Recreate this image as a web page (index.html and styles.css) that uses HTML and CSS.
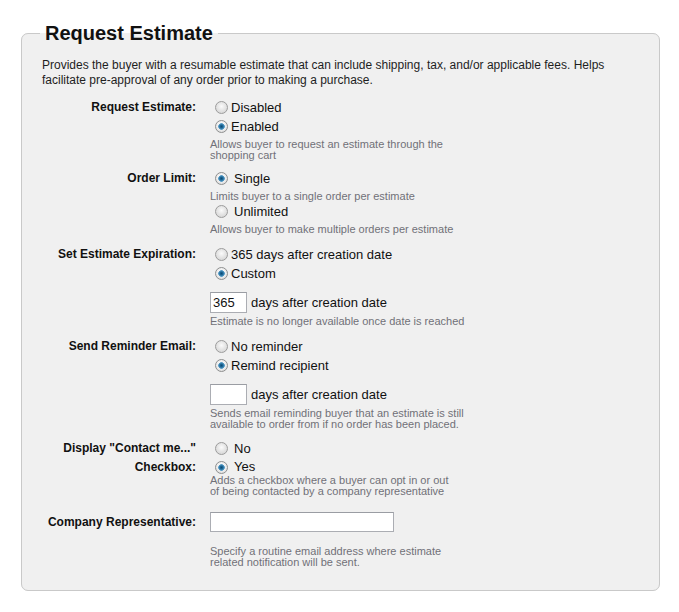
FILE: index.html
```html
<!DOCTYPE html>
<html>
<head>
<meta charset="utf-8">
<link rel="stylesheet" href="styles.css">
</head>
<body>
<fieldset class="panel">
  <legend class="panel-title">Request Estimate</legend>
  <p class="intro">Provides the buyer with a resumable estimate that can include shipping, tax, and/or applicable fees. Helps<br>facilitate pre-approval of any order prior to making a purchase.</p>

  <div class="row row-1">
    <div class="label">Request Estimate:</div>
    <div class="field">
      <label class="opt"><input class="radio" type="radio" name="re">Disabled</label>
      <label class="opt"><input class="radio" type="radio" name="re" checked>Enabled</label>
      <div class="help">Allows buyer to request an estimate through the<br>shopping cart</div>
    </div>
  </div>

  <div class="row row-2">
    <div class="label">Order Limit:</div>
    <div class="field">
      <label class="opt wide"><input class="radio" type="radio" name="ol" checked>Single</label>
      <div class="help">Limits buyer to a single order per estimate</div>
      <label class="opt wide"><input class="radio" type="radio" name="ol">Unlimited</label>
      <div class="help">Allows buyer to make multiple orders per estimate</div>
    </div>
  </div>

  <div class="row row-3">
    <div class="label">Set Estimate Expiration:</div>
    <div class="field">
      <label class="opt"><input class="radio" type="radio" name="ex">365 days after creation date</label>
      <label class="opt"><input class="radio" type="radio" name="ex" checked>Custom</label>
      <div class="days"><input class="num" type="text" value="365"><span class="days-text">days after creation date</span></div>
      <div class="help">Estimate is no longer available once date is reached</div>
    </div>
  </div>

  <div class="row row-4">
    <div class="label">Send Reminder Email:</div>
    <div class="field">
      <label class="opt"><input class="radio" type="radio" name="rm">No reminder</label>
      <label class="opt"><input class="radio" type="radio" name="rm" checked>Remind recipient</label>
      <div class="days"><input class="num" type="text" value=""><span class="days-text">days after creation date</span></div>
      <div class="help">Sends email reminding buyer that an estimate is still<br>available to order from if no order has been placed.</div>
    </div>
  </div>

  <div class="row row-5">
    <div class="label">Display "Contact me..."<br>Checkbox:</div>
    <div class="field">
      <label class="opt wide"><input class="radio" type="radio" name="cm">No</label>
      <label class="opt wide opt-short"><input class="radio" type="radio" name="cm" checked>Yes</label>
      <div class="help help-tight">Adds a checkbox where a buyer can opt in or out<br>of being contacted by a company representative</div>
    </div>
  </div>

  <div class="row row-6">
    <div class="label label-input">Company Representative:</div>
    <div class="field">
      <input class="text" type="text" value="">
      <div class="help help-loose">Specify a routine email address where estimate<br>related notification will be sent.</div>
    </div>
  </div>
</fieldset>
</body>
</html>
```

FILE: styles.css
```css
html, body {
  margin: 0;
  padding: 0;
  background: #ffffff;
}

body {
  font-family: "Liberation Sans", Arial, sans-serif;
  color: #222222;
  padding: 0 20px 24px 21px;
}

.panel {
  margin: 21px 0 0 0;
  width: 639px;
  box-sizing: border-box;
  border: 1px solid #c9c9c9;
  border-radius: 7px;
  background: #f0f0f0;
  padding: 13px 20px 22px 20px;
  min-inline-size: 0;
}

.panel-title {
  font-size: 20px;
  line-height: 24px;
  font-weight: bold;
  color: #111111;
  padding: 0 5px;
  margin-left: -2px;
}

.intro {
  margin: 0;
  font-size: 12px;
  line-height: 15px;
  color: #1e1e1e;
}

.row {
  display: grid;
  grid-template-columns: 154px 1fr;
  column-gap: 14px;
}

.row-1 { margin-top: 10px; }
.row-2 { margin-top: 8px; }
.row-3 { margin-top: 10px; }
.row-4 { margin-top: 10px; }
.row-5 { margin-top: 9px; }
.row-6 { margin-top: 15px; }

.label {
  text-align: right;
  font-weight: bold;
  font-size: 12px;
  line-height: 19px;
  color: #111111;
}

.label-input {
  line-height: 20px;
}

.field {
  display: flex;
  flex-direction: column;
  align-items: flex-start;
}

.opt {
  display: flex;
  align-items: center;
  height: 19px;
  font-size: 13px;
  color: #111111;
}

.opt-short {
  height: 12px;
  line-height: 12px;
  margin-top: 3px;
}

.radio {
  appearance: none;
  -webkit-appearance: none;
  width: 13px;
  height: 13px;
  margin: 0 3px 0 5px;
  border-radius: 50%;
  box-sizing: border-box;
  border: 1px solid #9c9c9c;
  background: radial-gradient(circle at 50% 40%, #fbfbfb 0, #e6e6e6 45%, #cfcfcf 100%);
  flex: none;
}

.radio:checked {
  border-color: #8e8f8f;
  background:
    radial-gradient(circle at 50% 50%, #0d4a73 0, #1f6a99 1.6px, #5b9ec8 3px, rgba(255,255,255,0) 3.6px),
    radial-gradient(circle at 50% 40%, #ffffff 0, #ececec 55%, #d2d2d2 100%);
}

.wide .radio {
  margin-right: 6px;
}

.help {
  font-size: 11px;
  line-height: 11px;
  color: #717178;
  margin-top: 3px;
}

.help-tight {
  margin-top: 2px;
}

.help-loose {
  margin-top: 14px;
}

.days {
  display: flex;
  align-items: center;
  margin-top: 9px;
}

.num {
  width: 37px;
  height: 21px;
  box-sizing: border-box;
  border: 1px solid #abadb3;
  border-top-color: #9a9da3;
  background: #ffffff;
  font-family: "Liberation Sans", Arial, sans-serif;
  font-size: 13px;
  color: #111111;
  padding: 0 2px;
  margin: 0;
  outline: none;
}

.days-text {
  font-size: 13px;
  color: #111111;
  margin-left: 4px;
}

.text {
  width: 184px;
  height: 20px;
  box-sizing: border-box;
  border: 1px solid #abadb3;
  border-top-color: #9a9da3;
  background: #ffffff;
  margin: 0;
  padding: 0 2px;
  outline: none;
}
```
